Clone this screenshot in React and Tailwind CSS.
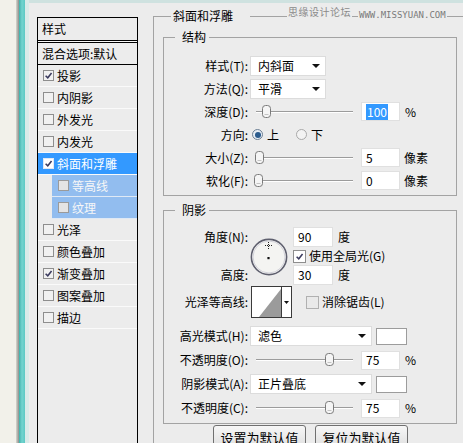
import React from "react";

const styles = [
  { name: "投影", checked: true },
  { name: "内阴影" },
  { name: "外发光" },
  { name: "内发光" },
  { name: "斜面和浮雕", checked: true, active: true },
  { name: "等高线", sub: true },
  { name: "纹理", sub: true },
  { name: "光泽" },
  { name: "颜色叠加" },
  { name: "渐变叠加", checked: true },
  { name: "图案叠加" },
  { name: "描边" },
];

function Arrow({ small }) {
  return small ? (
    <svg width="5" height="3" viewBox="0 0 5 3">
      <polygon points="0,0 5,0 2.5,3" fill="#111" />
    </svg>
  ) : (
    <svg width="8" height="4" viewBox="0 0 8 4">
      <polygon points="0,0 8,0 4,4" fill="#111" />
    </svg>
  );
}

function Check({ on, box = "h-[11px] w-[11px]", tone = "bg-[#f1f1f1] border-[#8e8e8e]" }) {
  return (
    <span className={`flex shrink-0 items-center justify-center border ${box} ${tone}`}>
      {on && (
        <svg width="9" height="9" viewBox="0 0 10 10">
          <path d="M1.8 5.2 L4.2 7.6 L8.4 2.2" fill="none" stroke="#3a3a5e" strokeWidth="1.7" />
        </svg>
      )}
    </span>
  );
}

function StyleList() {
  return (
    <div className="mt-[14px] h-[440px] w-[101px] shrink-0 border border-black bg-[#ececec]">
      <div className="flex h-[22px] items-center pl-[4px]">样式</div>
      <div className="h-[1px] bg-black" />
      <div className="h-[1px] bg-[#f8f8f8]" />
      <div className="h-[1px] bg-black" />
      <div className="flex h-[21px] items-center pl-[4px]">混合选项:默认</div>
      <div className="h-[1px] bg-black" />
      {styles.map((s) =>
        s.sub ? (
          <div key={s.name} className="flex h-[22px] pl-[14px]">
            <div className="flex flex-1 items-center border-b border-[#dfe9f5] bg-[#92bdef] pl-[6px] text-[#f7f7f7]">
              <Check tone="bg-[#e4e4e4] border-[#9a9a9a]" />
              <span className="ml-[3px]">{s.name}</span>
            </div>
          </div>
        ) : (
          <div
            key={s.name}
            className={`flex h-[22px] items-center border-b border-[#fafafa] pl-[5px] ${
              s.active ? "bg-[#3399ff] text-white" : ""
            }`}
          >
            <Check on={s.checked} tone={s.active ? "bg-white border-[#dfe8f5]" : "bg-[#f1f1f1] border-[#8e8e8e]"} />
            <span className="ml-[3px]">{s.name}</span>
          </div>
        )
      )}
    </div>
  );
}

function Row({ label, h = "h-[23px]", children }) {
  return (
    <div className={`flex items-center ${h}`}>
      <span className="w-[84px] shrink-0 text-right">{label}</span>
      {children}
    </div>
  );
}

function Select({ w, text }) {
  return (
    <div className={`ml-[2px] flex h-[20px] items-center justify-between border border-[#dcdcdc] bg-white pl-[7px] pr-[5px] ${w}`}>
      <span>{text}</span>
      <Arrow />
    </div>
  );
}

function Field({ children, w = "w-[39px]", h = "h-[19px]" }) {
  return (
    <div className={`flex items-center border border-[#e0e0e0] bg-white pl-[4px] ${w} ${h}`}>{children}</div>
  );
}

function Slider({ value }) {
  // thumb offset inside a 99px track, value 0..100
  const left = Math.round((value / 100) * 96) - 1;
  return (
    <div className="relative ml-[6px] h-[20px] w-[99px]">
      <div className="absolute left-[2px] right-0 top-[9px] h-[1px] bg-[#9c9c9c]" />
      <div className="absolute left-[2px] right-0 top-[10px] h-[1px] bg-white" />
      <svg className="absolute top-[3px]" style={{ left: Math.max(left, 0) }} width="9" height="13" viewBox="0 0 9 13">
        <rect x="0.5" y="0.5" width="8" height="12" rx="3" fill="#f5f5f5" stroke="#7a7a7a" />
        <line x1="2.5" y1="9.5" x2="6.5" y2="9.5" stroke="#c4c4c4" />
      </svg>
    </div>
  );
}

function Radio({ on }) {
  return (
    <span
      className={`flex h-[11px] w-[11px] shrink-0 items-center justify-center rounded-full border ${
        on ? "border-[#6d7f93] bg-[#e7eef5]" : "border-[#a9a9a9] bg-[#f3f3f3]"
      }`}
    >
      {on && <span className="h-[6px] w-[6px] rounded-full bg-[#2b5b8d]" />}
    </span>
  );
}

function Dial() {
  return (
    <svg width="38" height="38" viewBox="0 0 38 38">
      <circle cx="19" cy="19" r="17.6" fill="#f4f4f2" stroke="#5e5f6e" strokeWidth="1.6" />
      <circle cx="19" cy="19" r="16" fill="none" stroke="#d2d2da" strokeWidth="1" />
      <g stroke="#222" strokeWidth="1" strokeDasharray="1 1">
        <line x1="18.5" y1="4" x2="18.5" y2="11" />
        <line x1="15" y1="7.5" x2="22" y2="7.5" />
      </g>
      <rect x="17.4" y="19" width="2.2" height="2.2" fill="#111" />
    </svg>
  );
}

function Contour() {
  return (
    <div className="ml-[3px] flex h-[32px] w-[41px] border border-[#3a3a3a] bg-white">
      <svg width="29" height="30" viewBox="0 0 29 30">
        <polygon points="7,30 29,2 29,30" fill="#9b9b9b" />
      </svg>
      <div className="flex flex-1 items-center justify-center border-l border-[#3a3a3a]">
        <Arrow small />
      </div>
    </div>
  );
}

function Swatch() {
  return <div className="ml-[4px] h-[17px] w-[31px] border border-[#9c9c9c] bg-white" />;
}

export default function App() {
  return (
    <div className="relative flex h-[443px] w-[463px] overflow-hidden bg-[#ececec] font-['Noto_Sans_CJK_SC','Noto_Sans',sans-serif] text-[12px] leading-[16px] text-black">
      <div className="w-[16px] shrink-0 bg-[#f2f1ea]" />
      <div className="w-[3px] shrink-0 bg-linear-to-r from-[#d8d8d1] to-[#8d8e8a]" />
      <div className="w-[6px] shrink-0 bg-linear-to-r from-[#3fb1ac] via-[#72d4cf] to-[#5cc9c4]" />
      <div className="w-[4px] shrink-0 bg-[#d9ebe9]" />

      <div className="flex flex-1 flex-col border-t-[3px] border-[#cfe2e0]">
        <div className="flex items-start pl-[8px]">
          <StyleList />

          <fieldset className="ml-[15px] mt-[5px] w-[330px] shrink-0 border border-[#a3a3a3] pb-[20px]">
            <legend className="ml-[17px] pl-[2px] pr-[17px] leading-[16px]">斜面和浮雕</legend>
            <div className="pl-[9px]">
              <fieldset className="mt-[5px] w-[294px] border border-[#a3a3a3] pb-[3px]">
                <legend className="ml-[11px] pl-[7px] pr-[3px] leading-[16px]">结构</legend>
                <div className="pt-[9px]">
                  <Row label="样式(T):">
                    <Select w="w-[76px]" text="内斜面" />
                  </Row>
                  <Row label="方法(Q):">
                    <Select w="w-[76px]" text="平滑" />
                  </Row>
                  <Row label="深度(D):">
                    <Slider value={9} />
                    <div className="ml-[8px]">
                      <Field>
                        <span className="bg-[#3399ff] px-[1px] text-white">100</span>
                      </Field>
                    </div>
                    <span className="ml-[5px]">%</span>
                  </Row>
                  <Row label="方向:">
                    <span className="ml-[4px]">
                      <Radio on />
                    </span>
                    <span className="ml-[4px]">上</span>
                    <span className="ml-[17px]">
                      <Radio />
                    </span>
                    <span className="ml-[4px]">下</span>
                  </Row>
                  <Row label="大小(Z):">
                    <Slider value={2} />
                    <div className="ml-[8px]">
                      <Field>5</Field>
                    </div>
                    <span className="ml-[4px]">像素</span>
                  </Row>
                  <Row label="软化(F):">
                    <Slider value={0} />
                    <div className="ml-[8px]">
                      <Field>0</Field>
                    </div>
                    <span className="ml-[4px]">像素</span>
                  </Row>
                </div>
              </fieldset>

              <fieldset className="mt-[6px] w-[294px] border border-[#a3a3a3] pb-[3px]">
                <legend className="ml-[11px] pl-[7px] pr-[3px] leading-[16px]">阴影</legend>
                <div className="flex pt-[9px]">
                  <div className="w-[84px] shrink-0 text-right">
                    <div className="h-[20px] leading-[20px]">角度(N):</div>
                    <div className="h-[18px]" />
                    <div className="h-[20px] leading-[20px]">高度:</div>
                  </div>
                  <div className="ml-[2px] mt-[11px]">
                    <Dial />
                  </div>
                  <div className="ml-[5px] flex flex-col">
                    <div className="flex h-[20px] items-center">
                      <Field w="w-[40px]" h="h-[20px]">90</Field>
                      <span className="ml-[5px]">度</span>
                    </div>
                    <div className="flex h-[18px] items-center">
                      <Check on box="h-[13px] w-[13px]" tone="bg-white border-[#8e8e8e]" />
                      <span className="ml-[3px]">使用全局光(G)</span>
                    </div>
                    <div className="flex h-[20px] items-center">
                      <Field w="w-[40px]" h="h-[20px]">30</Field>
                      <span className="ml-[5px]">度</span>
                    </div>
                  </div>
                </div>
                <div className="mt-[1px]">
                  <Row label="光泽等高线:" h="h-[32px]">
                    <Contour />
                    <span className="ml-[14px]">
                      <Check box="h-[13px] w-[13px]" tone="bg-[#e9e9e9] border-[#b0b0b0]" />
                    </span>
                    <span className="ml-[3px]">消除锯齿(L)</span>
                  </Row>
                </div>
                <div className="mt-[6px]">
                  <Row label="高光模式(H):" h="h-[24px]">
                    <Select w="w-[122px]" text="滤色" />
                    <Swatch />
                  </Row>
                  <Row label="不透明度(O):" h="h-[24px]">
                    <Slider value={75} />
                    <div className="ml-[8px]">
                      <Field>75</Field>
                    </div>
                    <span className="ml-[5px]">%</span>
                  </Row>
                  <Row label="阴影模式(A):" h="h-[24px]">
                    <Select w="w-[122px]" text="正片叠底" />
                    <Swatch />
                  </Row>
                  <Row label="不透明度(C):" h="h-[24px]">
                    <Slider value={75} />
                    <div className="ml-[8px]">
                      <Field>75</Field>
                    </div>
                    <span className="ml-[5px]">%</span>
                  </Row>
                </div>
              </fieldset>

              <div className="mt-[1px] flex gap-[9px] pl-[50px]">
                <button className="h-[26px] w-[93px] rounded-[3px] border border-[#707070] bg-linear-to-b from-[#f7f7f7] to-[#dcdcdc] text-[13px] leading-[24px]">
                  设置为默认值
                </button>
                <button className="h-[26px] w-[93px] rounded-[3px] border border-[#707070] bg-linear-to-b from-[#f7f7f7] to-[#dcdcdc] text-[13px] leading-[24px]">
                  复位为默认值
                </button>
              </div>
            </div>
          </fieldset>
        </div>
      </div>

      <div className="absolute left-[287px] top-[4px] flex items-start">
        <span className="bg-[#ececec] px-[1px] text-[10px] leading-[16px] tracking-[0.5px] text-[#8a8a8a]">
          思缘设计论坛
        </span>
        <span className="ml-[6px] mt-[6px] bg-[#ececec] px-[1px] font-['DejaVu_Sans_Mono',monospace] text-[9px] leading-[11px] text-[#7a7a7a]">
          WWW.MISSYUAN.COM
        </span>
      </div>
    </div>
  );
}
